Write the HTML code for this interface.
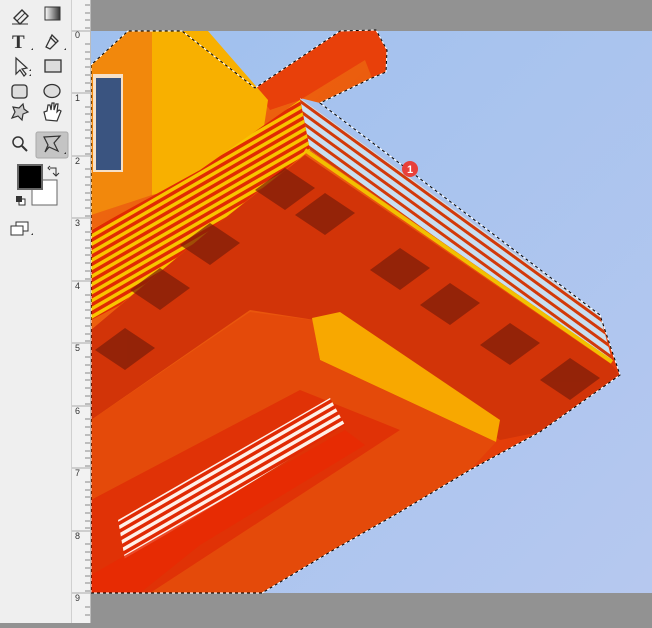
<!DOCTYPE html>
<html><head><meta charset="utf-8"><style>
html,body{margin:0;padding:0;width:652px;height:623px;overflow:hidden;background:#929292;font-family:"Liberation Sans",sans-serif}
#tools{position:absolute;left:0;top:0;width:71px;height:623px;background:#efefef;border-right:1px solid #d0d0d0}
#ruler{position:absolute;left:72px;top:0;width:18px;height:623px;background:#f2f2f2;border-right:1px solid #bbb}
#ruler span{position:absolute;left:3px;font-size:9px;color:#333}
#canvas{position:absolute;left:91px;top:0;width:561px;height:623px}
</style></head><body>
<div id="tools">
<svg width="71" height="623" viewBox="0 0 71 623">
<rect x="36" y="132" width="32" height="26" rx="2" fill="#c4c4c4" stroke="#aaa"/>
<path d="M14 18 L22 10 L28 16 L20 24 Z" fill="none" stroke="#333" stroke-width="1.4"/><path d="M17 21 L25 13" stroke="#333"/><path d="M12 24 H28" stroke="#333"/>
<defs><linearGradient id="gr" x1="0" x2="1"><stop offset="0" stop-color="#fff"/><stop offset="1" stop-color="#333"/></linearGradient></defs>
<rect x="45" y="7" width="15" height="13" fill="url(#gr)" stroke="#333"/>
<text x="12" y="48" font-size="19" font-family="Liberation Serif" font-weight="bold" fill="#333">T</text>
<path d="M46 47 L52 35 L58 41 L50 49 Z M50 37 L56 43" fill="none" stroke="#333" stroke-width="1.3"/>
<path d="M16 58 L16 74 L20 70 L24 76 L26 74 L22 69 L27 68 Z" fill="none" stroke="#333" stroke-width="1.2"/>
<rect x="45" y="60" width="16" height="12" fill="#ddd" stroke="#333" stroke-width="1.3"/>
<rect x="12" y="85" width="15" height="13" rx="3" fill="#ddd" stroke="#333" stroke-width="1.3"/>
<ellipse cx="52" cy="91" rx="8" ry="6.5" fill="#ddd" stroke="#333" stroke-width="1.3"/>
<path d="M12 118 L15 112 L13 107 L19 108 L23 104 L24 109 L28 112 L23 114 L22 120 L18 116 Z" fill="#ccc" stroke="#333" stroke-width="1.2"/>
<path d="M46 120 L44 112 L47 111 L48 105 L50 105 L51 110 L52 103 L54 103 L54 110 L56 104 L58 104 L57 112 L59 110 L61 111 L57 121 Z" fill="#fff" stroke="#333" stroke-width="1.2"/>
<circle cx="18" cy="142" r="5" fill="none" stroke="#333" stroke-width="1.5"/><path d="M22 146 L27 151" stroke="#333" stroke-width="2"/>
<path d="M44 137 L60 136 L54 143 L58 151 L49 147 L45 152 L48 145 Z" fill="none" stroke="#333" stroke-width="1.2"/>
<rect x="32" y="180" width="25" height="25" fill="#fff" stroke="#666"/>
<rect x="18" y="165" width="24" height="24" fill="#000" stroke="#666" stroke-width="2"/>
<path d="M50 168 L56 168 L56 176 M53 173 L56 176 L59 173 M50 166 L48 168 L50 170" fill="none" stroke="#333"/>
<rect x="19" y="199" width="6" height="6" fill="#fff" stroke="#333"/><rect x="16" y="196" width="6" height="6" fill="#333"/>
<rect x="16" y="222" width="12" height="9" fill="#fff" stroke="#333"/><rect x="11" y="226" width="12" height="9" fill="#fff" stroke="#333"/>
<path d="M29 71 l2 0 0-2Z M64 50 l2 0 0-2Z M31 50 l2 0 0-2Z M31 235 l2 0 0-2Z M64 154 l2 0 0-2Z M29 76 l2 0 0-2Z" fill="#333"/>
</svg>
</div>
<div id="ruler">
<svg width="18" height="623" style="position:absolute;left:0;top:0">
<g stroke="#888" stroke-width="1">
<path d="M13 5H18M13 13H18M13 20H18M13 28H18M13 44H18M13 52H18M13 59H18M13 67H18M13 75H18M13 83H18M13 91H18M13 107H18M13 114H18M13 122H18M13 130H18M13 138H18M13 146H18M13 154H18M13 169H18M13 177H18M13 185H18M13 193H18M13 200H18M13 208H18M13 216H18M13 232H18M13 240H18M13 248H18M13 255H18M13 263H18M13 271H18M13 279H18M13 295H18M13 302H18M13 310H18M13 318H18M13 326H18M13 334H18M13 341H18M13 357H18M13 365H18M13 373H18M13 380H18M13 388H18M13 396H18M13 404H18M13 419H18M13 427H18M13 435H18M13 443H18M13 451H18M13 458H18M13 466H18M13 482H18M13 490H18M13 497H18M13 505H18M13 513H18M13 521H18M13 528H18M13 544H18M13 552H18M13 560H18M13 568H18M13 576H18M13 583H18M13 591H18M13 607H18M13 615H18"/>
<path d="M0 31H18M0 93H18M0 156H18M0 218H18M0 281H18M0 343H18M0 406H18M0 468H18M0 531H18M0 593H18" stroke="#aaa"/>
</g></svg>
<span style="top:30px">0</span><span style="top:93px">1</span><span style="top:156px">2</span><span style="top:218px">3</span><span style="top:281px">4</span><span style="top:343px">5</span><span style="top:406px">6</span><span style="top:468px">7</span><span style="top:531px">8</span><span style="top:593px">9</span>
</div>
<div id="canvas">
<svg width="561" height="623" viewBox="91 0 561 623">
<defs>
<linearGradient id="sky" x1="0" y1="0" x2="1" y2="1"><stop offset="0" stop-color="#9fc0ee"/><stop offset="1" stop-color="#b6c8ef"/></linearGradient>
<linearGradient id="bod" x1="0" y1="0" x2="1" y2="1"><stop offset="0" stop-color="#f07010"/><stop offset="0.6" stop-color="#e64a0c"/><stop offset="1" stop-color="#e22a04"/></linearGradient>
<pattern id="rail" width="8" height="8" patternUnits="userSpaceOnUse" patternTransform="rotate(36)"><rect width="8" height="8" fill="#c9dff0"/><rect width="8" height="3" fill="#d23a0a"/></pattern>
<pattern id="rail2" width="7" height="7" patternUnits="userSpaceOnUse" patternTransform="rotate(-30)"><rect width="7" height="7" fill="#f8c400"/><rect width="7" height="3.5" fill="#e02a04"/></pattern>
<pattern id="rail3" width="7" height="7" patternUnits="userSpaceOnUse" patternTransform="rotate(-30)"><rect width="7" height="7" fill="#fff0e8"/><rect width="7" height="3.5" fill="#e02a04"/></pattern>
</defs>
<rect x="91" y="31" width="561" height="562" fill="url(#sky)"/>
<path d="M91 65 L128 31 L182 31 L255 88 L340 31 L376 30 L387 50 L386 72 L372 78 L320 103 L300 98 L600 315 L620 375 L540 432 L470 470 L400 512 L330 552 L262 593 L91 593 Z" fill="url(#bod)"/>
<path d="M255 88 L340 31 L376 30 L387 50 L386 72 L372 78 L365 60 L300 100 L270 110 Z" fill="#e8400a"/>
<path d="M152 31 L208 31 L268 100 L262 140 L215 180 L152 195 Z" fill="#f8b000"/>
<path d="M91 65 L128 31 L152 31 L152 195 L91 215 Z" fill="#f2880c"/>
<rect x="93" y="74" width="30" height="98" fill="#f6e0c8"/><rect x="96" y="78" width="25" height="92" fill="#3a5480"/>
<path d="M91 230 L200 170 L300 100 L310 150 L210 230 L120 305 L91 320 Z" fill="url(#rail2)"/>
<path d="M300 98 L600 315 L612 360 L310 150 Z" fill="url(#rail)"/>
<path d="M305 150 L612 362" stroke="#f2c000" stroke-width="4"/>
<path d="M91 330 L210 230 L305 155 L612 365 L620 375 L540 432 L500 440 L315 320 L250 310 L91 420 Z" fill="#d23408"/>
<g fill="#7a1c08" opacity="0.7">
<path d="M255 190 l30 -22 l30 20 l-30 22 Z"/><path d="M295 215 l30 -22 l30 20 l-30 22 Z"/>
<path d="M370 270 l30 -22 l30 20 l-30 22 Z"/><path d="M420 305 l30 -22 l30 20 l-30 22 Z"/>
<path d="M480 345 l30 -22 l30 20 l-30 22 Z"/><path d="M540 380 l30 -22 l30 20 l-30 22 Z"/>
<path d="M180 245 l30 -22 l30 20 l-30 22 Z"/><path d="M130 290 l30 -22 l30 20 l-30 22 Z"/>
<path d="M95 350 l30 -22 l30 20 l-30 22 Z"/>
</g>
<path d="M312 318 L340 312 L500 420 L496 442 L320 360 Z" fill="#f8a800"/>
<path d="M91 420 L250 312 L312 320 L320 360 L496 442 L470 470 L400 512 L330 552 L262 593 L91 593 Z" fill="#e44a0a"/>
<path d="M91 500 L300 390 L400 430 L150 593 L91 593 Z" fill="#e03206"/>
<path d="M118 520 L330 398 L345 425 L125 560 Z" fill="url(#rail3)"/>
<path d="M91 575 L345 430 L365 445 L200 545 L140 593 L91 593 Z" fill="#e82a04" opacity="0.85"/>
<path d="M91 593 L262 593 L330 552 L400 512 L470 470 L540 432 L620 375 L600 315 L320 103 L372 78 L386 72 L387 50 L376 30 L340 31 L255 88 L182 31 L128 31 L91 65 Z" fill="none" stroke="#fff" stroke-width="1"/>
<path d="M91 593 L262 593 L330 552 L400 512 L470 470 L540 432 L620 375 L600 315 L320 103 L372 78 L386 72 L387 50 L376 30 L340 31 L255 88 L182 31 L128 31 L91 65 Z" fill="none" stroke="#000" stroke-width="1" stroke-dasharray="3 3"/>
<circle cx="410" cy="169" r="8" fill="#e8403a"/>
<text x="410" y="173" font-size="11" fill="#fff" text-anchor="middle" font-weight="bold">1</text>
</svg>
</div>
</body></html>
